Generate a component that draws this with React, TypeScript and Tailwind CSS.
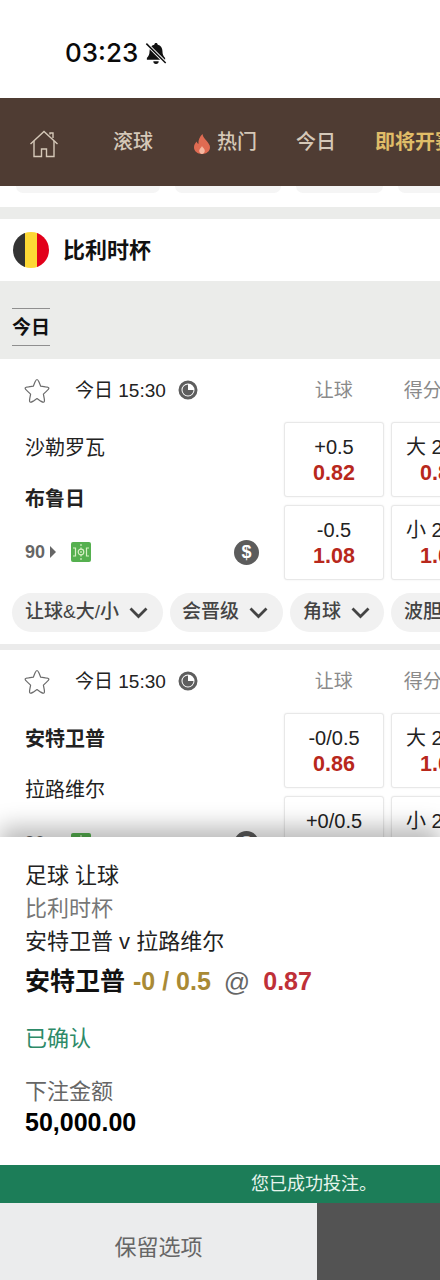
const font = "font-['Liberation_Sans','Noto_Sans_CJK_SC',sans-serif]";

function BellOffIcon() {
  return (
    <svg width="22" height="22" viewBox="1 0.500 20 20.500" className="ml-[7px]">
      <path d="M11 1.500c.9 0 1.500.6 1.600 1.500 2.900.7 4.400 3 4.400 6 0 3.200.8 4.800 2.500 6.500v1.500H2.500v-1.500C4.200 13.800 5 12.200 5 9c0-3 1.500-5.300 4.400-6 .1-.9.7-1.500 1.600-1.500z" fill="#111" />
      <path d="M8.500 18.500h5a2.500 2.500 0 0 1-5 0z" fill="#111" />
      <path d="M2 2 20 20" stroke="#fff" strokeWidth="3.200" />
      <path d="M2 2 20 20" stroke="#111" strokeWidth="1.400" />
    </svg>
  );
}

function HomeIcon() {
  return (
    <svg width="30" height="28" viewBox="0 0 30 28" fill="none" stroke="#d5c8b8" strokeWidth="1.400">
      <path d="M1.500 14 15 1.500 28.500 14" />
      <path d="M21 4.500V3h3v5" />
      <path d="M5 11v15.500h7.500V19h5v7.500H25V11" />
    </svg>
  );
}

function FlameIcon() {
  return (
    <svg width="16" height="20" viewBox="0 0 16 20">
      <path d="M8.500 0c.4 3 2 4.300 3.800 6.500C14.300 9 16 10.800 16 13.300 16 17.300 12.500 20 8 20s-8-2.700-8-6.700c0-2.500 1.300-4.300 2.700-5.800.3 1.200.8 2 1.700 2.500C4.200 6 5.800 2.500 8.500 0z" fill="#df6b52" />
      <path d="M8 12c.3 1.500 2.800 2.500 2.800 4.800 0 1.700-1.300 3.200-2.800 3.200s-2.800-1.500-2.800-3.200C5.200 14.700 7.400 14 8 12z" fill="#f5b7a0" />
    </svg>
  );
}

function StarIcon() {
  return (
    <svg width="26" height="26" viewBox="0 0 26 26" fill="none" stroke="#6b6b6b" strokeWidth="1.200" strokeLinejoin="round">
      <path d="M13 1.500c.8 0 1.300 1 2 2.500l1.700 4.200 4.800.6c2 .2 3.400.6 3.400 1.500 0 .8-1 1.600-2.300 2.800l-3.200 3 .9 4.800c.3 1.700.3 3.100-.6 3.300-.8.200-1.900-.5-3.300-1.300L13 20.600l-3.400 2.300c-1.400.8-2.500 1.500-3.300 1.300-.9-.2-.9-1.600-.6-3.300l.9-4.800-3.200-3c-1.300-1.200-2.300-2-2.300-2.800 0-.9 1.400-1.300 3.400-1.500l4.800-.6L11 4c.7-1.500 1.200-2.500 2-2.500z" />
    </svg>
  );
}

function MoonClock() {
  return (
    <svg width="20" height="20" viewBox="0 0 20 20">
      <circle cx="10" cy="10" r="8" fill="none" stroke="#5e5e5e" strokeWidth="3" />
      <path d="M10 4.500V10h5.500A5.500 5.500 0 1 1 10 4.500z" fill="#5e5e5e" />
    </svg>
  );
}

function PitchIcon() {
  return (
    <svg width="20" height="20" viewBox="0 0 20 20" fill="none">
      <rect width="20" height="20" rx="2" fill="#55b04f" />
      <g stroke="#d6efc4" strokeWidth="1.200">
        <path d="M10 2v16" strokeDasharray="2 1.500" />
        <circle cx="10" cy="10" r="2.800" />
        <path d="M2 6h2.500v8H2M18 6h-2.500v8H18" />
      </g>
    </svg>
  );
}

function DollarBadge() {
  return (
    <div className="flex h-[25px] w-[25px] items-center justify-center rounded-full bg-[#5c5c5c] text-[18px] font-bold text-white">
      $
    </div>
  );
}

function OddsCell({ line, price }: { line: string; price: string }) {
  return (
    <div className="flex h-[75px] w-[100px] shrink-0 flex-col items-center justify-center rounded-[3px] border border-[#e8e8e8] bg-white pt-[1px] whitespace-nowrap shadow-[0_0_2px_rgba(0,0,0,0.08)]">
      <span className="text-[20px] leading-[26px] text-[#222]">{line}</span>
      <span className="text-[21.500px] leading-[26px] font-bold text-[#b8281c]">{price}</span>
    </div>
  );
}

function Pill({ label, className }: { label: string; className: string }) {
  return (
    <div className={`flex h-[39px] shrink-0 items-center gap-[10px] rounded-full bg-[#f1f1f1] whitespace-nowrap text-[19px] font-medium text-[#444] ${className}`}>
      {label}
      <svg width="19" height="12" viewBox="0 0 19 12" fill="none" stroke="#444" strokeWidth="2.800">
        <path d="M1.500 1.500 9.500 9.500 17.500 1.500" />
      </svg>
    </div>
  );
}

function MatchCard({
  home,
  away,
  homeBold,
  odds,
}: {
  home: string;
  away: string;
  homeBold: boolean;
  odds: { a: string; b: string; c: string; d: string; e: string; f: string; g: string; h: string };
}) {
  return (
    <div className="bg-white pt-[18px]">
      <div className="flex h-[27px] items-center whitespace-nowrap">
        <div className="ml-[24px] w-[51px] shrink-0">
          <StarIcon />
        </div>
        <span className="shrink-0 pt-[2px] text-[19px] text-[#222]">今日 15:30</span>
        <div className="mb-[2px] ml-[12px] shrink-0">
          <MoonClock />
        </div>
        <span className="ml-[117px] w-[89px] shrink-0 pt-[2px] text-[19px] text-[#8a8a8a]">让球</span>
        <span className="shrink-0 pt-[2px] text-[19px] text-[#8a8a8a]">得分</span>
      </div>
      <div className="mt-[18px] flex">
        <div className="w-[284px] shrink-0 pl-[25px] pr-[25px]">
          <div className={`flex h-[50px] items-center pt-[2px] text-[20px] text-[#222] ${homeBold ? "font-bold" : ""}`}>{home}</div>
          <div className={`mt-[1px] flex h-[50px] items-center pt-[1px] text-[20px] text-[#222] ${homeBold ? "" : "font-bold"}`}>{away}</div>
          <div className="mt-[14px] flex h-[30px] items-center">
            <span className="text-[18px] font-bold text-[#666]">90</span>
            <span className="ml-[5px] h-0 w-0 border-y-[6px] border-l-[6px] border-y-transparent border-l-[#666]" />
            <div className="ml-[15px]">
              <PitchIcon />
            </div>
            <div className="ml-auto">
              <DollarBadge />
            </div>
          </div>
        </div>
        <div className="flex shrink-0 flex-col gap-[8px]">
          <OddsCell line={odds.a} price={odds.b} />
          <OddsCell line={odds.c} price={odds.d} />
        </div>
        <div className="ml-[7px] flex shrink-0 flex-col gap-[8px]">
          <OddsCell line={odds.e} price={odds.f} />
          <OddsCell line={odds.g} price={odds.h} />
        </div>
      </div>
    </div>
  );
}

export default function App() {
  return (
    <div className={`relative h-[1280px] w-[440px] overflow-hidden bg-white ${font}`}>
      {/* status bar */}
      <div className="flex h-[98px] items-center pl-[65px] pt-[7px]">
        <span className="font-['Inter'] text-[26px] font-medium text-[#0a0a0a]">03:23</span>
        <BellOffIcon />
      </div>

      {/* nav */}
      <div className="flex h-[88px] items-center overflow-hidden whitespace-nowrap bg-[#4f3c33] text-[20px] font-medium text-[#d5c8b8]">
        <div className="ml-[29px] mt-[3px] shrink-0">
          <HomeIcon />
        </div>
        <span className="ml-[54px] shrink-0">滚球</span>
        <div className="ml-[41px] mt-[3px] shrink-0">
          <FlameIcon />
        </div>
        <span className="ml-[7px] shrink-0">热门</span>
        <span className="ml-[39px] shrink-0">今日</span>
        <span className="ml-[39px] shrink-0 font-bold text-[#e0bd68]">即将开赛</span>
      </div>

      {/* pills peeking out from under the nav */}
      <div className="flex h-[21px] items-start overflow-hidden">
        <div className="ml-[16px] h-[7px] w-[144px] shrink-0 rounded-b-[14px] bg-[#f5f5f5]" />
        <div className="ml-[15px] h-[7px] w-[106px] shrink-0 rounded-b-[14px] bg-[#f5f5f5]" />
        <div className="ml-[15px] h-[7px] w-[87px] shrink-0 rounded-b-[14px] bg-[#f5f5f5]" />
        <div className="ml-[15px] h-[7px] w-[87px] shrink-0 rounded-b-[14px] bg-[#f5f5f5]" />
      </div>
      <div className="h-[12px] bg-[#ebecea]" />

      {/* league header */}
      <div className="flex h-[62px] items-center bg-white pl-[13px]">
        <div className="flex h-[36px] w-[36px] overflow-hidden rounded-full">
          <div className="w-1/3 bg-[#333333]" />
          <div className="w-1/3 bg-[#fdd835]" />
          <div className="w-1/3 bg-[#e2001a]" />
        </div>
        <span className="ml-[14px] text-[22px] font-bold text-[#111]">比利时杯</span>
      </div>

      {/* tabs */}
      <div className="flex h-[78px] items-start bg-[#ebecea] pl-[12px] pt-[27px]">
        <div className="flex h-[38px] w-[38px] items-center justify-center border-y border-[#8f8f8f] pt-[3px] text-[19px] font-bold text-[#111]">
          今日
        </div>
      </div>

      <MatchCard
        home="沙勒罗瓦"
        away="布鲁日"
        homeBold={false}
        odds={{ a: "+0.5", b: "0.82", c: "-0.5", d: "1.08", e: "大 2.5/3", f: "0.88", g: "小 2.5/3", h: "1.02" }}
      />

      <div className="flex gap-[7px] overflow-hidden bg-white pb-[12px] pl-[12px] pt-[13px]">
        <Pill label="让球&大/小" className="w-[151px] pl-[13px]" />
        <Pill label="会晋级" className="w-[113px] pl-[12px]" />
        <Pill label="角球" className="w-[94px] pl-[13px]" />
        <Pill label="波胆" className="w-[94px] pl-[13px]" />
      </div>

      <div className="h-[6px] bg-[#ebebeb]" />

      <MatchCard
        home="安特卫普"
        away="拉路维尔"
        homeBold={true}
        odds={{ a: "-0/0.5", b: "0.86", c: "+0/0.5", d: "1.04", e: "大 2.5/3", f: "1.00", g: "小 2.5/3", h: "0.90" }}
      />

      {/* bet receipt sheet */}
      <div className="absolute inset-x-0 bottom-0 flex h-[443px] flex-col bg-white shadow-[0_-10px_22px_rgba(0,0,0,0.28)]">
        <div className="flex h-[328px] flex-col pl-[25px] pt-[24px]">
          <span className="text-[22px] leading-[30px] text-[#222]">足球 让球</span>
          <span className="mt-[3px] text-[22px] leading-[30px] text-[#777]">比利时杯</span>
          <span className="mt-[3px] text-[22px] leading-[30px] text-[#222]">安特卫普 v 拉路维尔</span>
          <div className="mt-[7px] flex h-[36px] items-center whitespace-nowrap">
            <span className="text-[25px] font-bold text-[#111]">安特卫普</span>
            <span className="ml-[8px] text-[25px] font-bold text-[#a98a35]">-0 / 0.5</span>
            <span className="ml-[13px] text-[26px] text-[#666]">@</span>
            <span className="ml-[13px] text-[25px] font-bold text-[#bf3038]">0.87</span>
          </div>
          <span className="mt-[24px] text-[22px] leading-[30px] text-[#2d8a68]">已确认</span>
          <span className="mt-[23px] text-[22px] leading-[30px] text-[#666]">下注金额</span>
          <span className="text-[25px] leading-[30px] font-bold text-black">50,000.00</span>
        </div>
        <div className="flex h-[38px] items-center justify-end bg-[#1c7d58] pr-[63px] text-[18px] text-[#e6f4ec]">
          您已成功投注。
        </div>
        <div className="flex h-[77px]">
          <div className="flex w-[317px] items-center justify-center bg-[#ebeced] pt-[12px] text-[22px] text-[#666]">保留选项</div>
          <div className="flex-1 bg-[#535353]" />
        </div>
      </div>
    </div>
  );
}
